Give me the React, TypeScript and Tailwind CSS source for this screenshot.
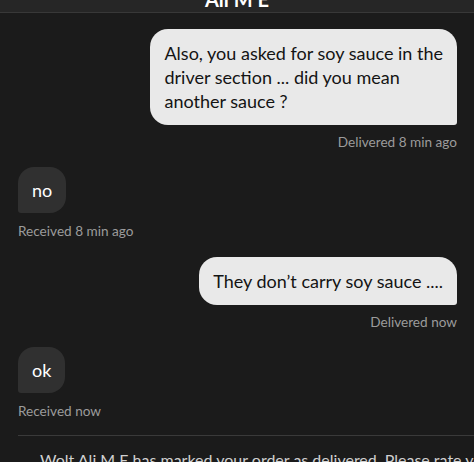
import React from "react";

const font = { fontFamily: "Lato, 'Noto Sans', sans-serif" };

function Outgoing({ text, status }: { text: React.ReactNode; status: string }) {
  return (
    <div className="flex flex-col items-end">
      <div className="bg-[#e9e9e9] text-[#141414] text-[18px] leading-[24px] px-[14px] py-[12px] rounded-[18px] rounded-br-[3px] whitespace-nowrap">
        {text}
      </div>
      <div className="mt-[8px] text-[13.6px] leading-[18px] text-[#9b9b9b]">{status}</div>
    </div>
  );
}

function Incoming({ text, status }: { text: string; status: string }) {
  return (
    <div className="flex flex-col items-start">
      <div className="bg-[#303030] text-white text-[18px] leading-[24px] px-[14px] py-[11px] rounded-[16px] rounded-bl-[3px]">
        {text}
      </div>
      <div className="mt-[9px] text-[13.6px] leading-[18px] text-[#9b9b9b]">{status}</div>
    </div>
  );
}

export default function App() {
  return (
    <div className="w-[474px] h-[462px] overflow-hidden bg-[#1b1b1b] flex flex-col" style={font}>
      <div className="h-[13px] shrink-0 bg-[#262626] border-b border-[#383838] flex justify-center overflow-hidden">
        <div className="mt-[-11px] text-[20px] leading-[20px] font-bold text-white">Ali M E</div>
      </div>
      <div className="flex flex-col pl-[18px] pr-[17px] pt-[16px]">
        <Outgoing
          text={
            <>
              Also, you asked for soy sauce in the
              <br />
              driver section ... did you mean
              <br />
              another sauce ?
            </>
          }
          status="Delivered 8 min ago"
        />
        <div className="mt-[16px]">
          <Incoming text="no" status="Received 8 min ago" />
        </div>
        <div className="mt-[17px]">
          <Outgoing text="They don’t carry soy sauce ...." status="Delivered now" />
        </div>
        <div className="mt-[16px]">
          <Incoming text="ok" status="Received now" />
        </div>
      </div>
      <div className="ml-[18px] mt-[15px] h-px shrink-0 bg-[#3a3a3a]" />
      <div className="pl-[40px] pt-[14px] text-[16px] leading-[20px] text-[#d0d0d0] whitespace-nowrap">
        Wolt Ali M E has marked your order as delivered. Please rate your
      </div>
    </div>
  );
}
